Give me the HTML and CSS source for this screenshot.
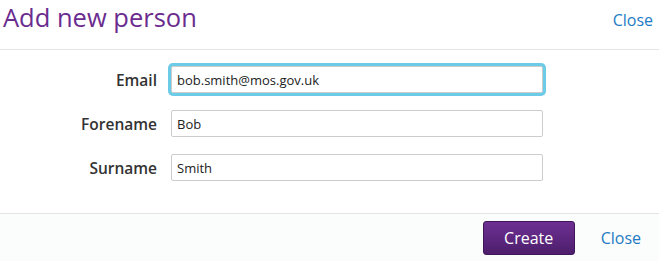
FILE: index.html
```html
<!DOCTYPE html>
<html>
<head>
	<meta charset="utf-8">
	<title>Add new person</title>
	<link rel="stylesheet" href="styles.css">
</head>
<body>
	<div class="modal">
		<div class="modal-header">
			<h1 class="modal-title">Add new person</h1>
			<a href="#" class="close-link top">Close</a>
		</div>

		<form class="person-form">
			<label class="field-label" for="email">Email</label>
			<input class="field-input focused" id="email" type="text" value="bob.smith@mos.gov.uk">

			<label class="field-label" for="forename">Forename</label>
			<input class="field-input" id="forename" type="text" value="Bob">

			<label class="field-label" for="surname">Surname</label>
			<input class="field-input" id="surname" type="text" value="Smith">
		</form>

		<div class="modal-footer">
			<button class="btn-create" type="button">Create</button>
			<a href="#" class="close-link">Close</a>
		</div>
	</div>
</body>
</html>
```

FILE: styles.css
```css
body {
	margin: 0;
	font-family: "Open Sans", "DejaVu Sans", sans-serif;
	background: #fff;
	color: #333;
}

.modal {
	width: 659px;
	height: 261px;
	display: flex;
	flex-direction: column;
}

.modal-header {
	height: 49px;
	display: flex;
	justify-content: space-between;
	align-items: flex-start;
	padding: 0 6px 0 3px;
	border-bottom: 1px solid #e4e4e4;
}

.modal-title {
	margin: 0;
	font-size: 25.5px;
	font-weight: 400;
	color: #6a2c8e;
}

.close-link {
	font-size: 16px;
	color: #237bc3;
	text-decoration: none;
}
.close-link.top {
	margin-top: 9px;
}

.person-form {
	display: grid;
	grid-template-columns: 157px 372px;
	column-gap: 14px;
	row-gap: 17px;
	align-items: center;
	padding: 16px 0 32px;
	border-bottom: 1px solid #e4e4e4;
}

.field-label {
	text-align: right;
	font-size: 15.5px;
	font-weight: 600;
	color: #333;
}

.field-input {
	box-sizing: border-box;
	height: 27px;
	margin: 0;
	padding: 0 5px;
	border: 1px solid #cccccc;
	border-radius: 2px;
	font-family: "Open Sans", "DejaVu Sans", sans-serif;
	font-size: 13px;
	color: #222;
	background: #fff;
	outline: none;
}
.field-input.focused {
	box-shadow: 0 0 0 3px #6ccbe6;
}

.modal-footer {
	flex: 1;
	display: flex;
	justify-content: flex-end;
	align-items: center;
	gap: 26px;
	padding-right: 18px;
	background: #fbfcfc;
}

.btn-create {
	width: 92px;
	height: 34px;
	border: 1px solid #3f1659;
	border-radius: 3px;
	background: linear-gradient(#6d3092, #4d1e6c);
	color: #fff;
	font-family: "Open Sans", "DejaVu Sans", sans-serif;
	font-size: 16px;
	margin-top: 1px;
}
```
